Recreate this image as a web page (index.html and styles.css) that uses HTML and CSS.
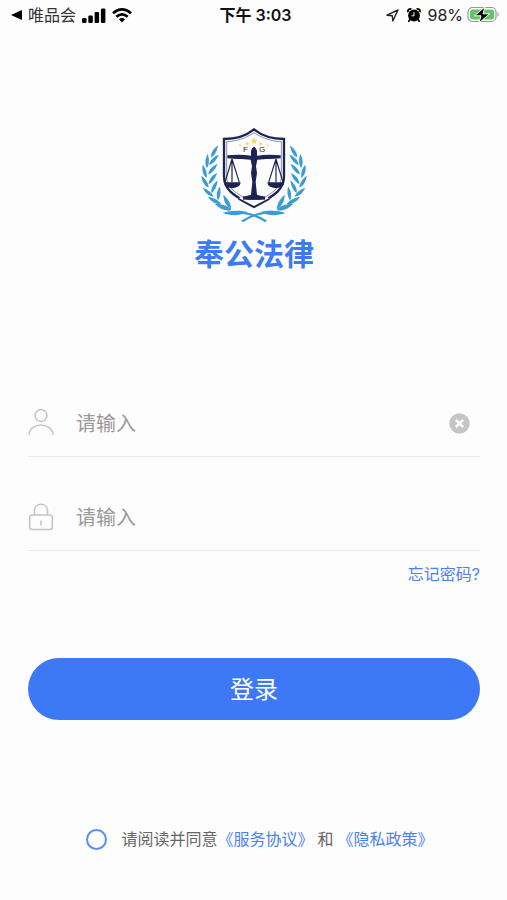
FILE: index.html
```html
<!DOCTYPE html>
<html lang="zh-CN">
<head>
<meta charset="utf-8">
<meta name="viewport" content="width=device-width, initial-scale=1">
<title>奉公法律</title>
<link rel="stylesheet" href="styles.css">
</head>
<body>
<header class="status">
  <div class="status-left">
    <svg width="11" height="10" viewBox="0 0 11 10" aria-hidden="true"><path d="M0 5L11 0V10Z"/></svg>
    <span class="status-app">唯品会</span>
    <svg width="24" height="15" viewBox="0 0 24 15" aria-hidden="true"><rect x="0" y="10" width="4.500" height="5" rx="1.200"/><rect x="6.300" y="7.500" width="4.500" height="7.500" rx="1.200"/><rect x="12.600" y="4" width="4.500" height="11" rx="1.200"/><rect x="18.900" y="0.500" width="4.500" height="14.500" rx="1.200"/></svg>
    <svg width="20" height="15" viewBox="0 0 20 15" aria-hidden="true"><g fill="none" stroke="#000" stroke-width="2.600"><path d="M1 5.300Q10 -2.400 19 5.300"/><path d="M4.300 8.800Q10 3.800 15.700 8.800"/></g><path d="M6.900 11.300Q10 8.800 13.100 11.300L10 14.600Z"/></svg>
  </div>
  <div class="status-time">下午 3:03</div>
  <div class="status-right">
    <svg width="13" height="13" viewBox="0 0 13 13" aria-hidden="true"><path d="M12 1L1 6.200L6.300 6.700L6.800 12Z" fill="none" stroke="#222" stroke-width="1.400" stroke-linejoin="round"/></svg>
    <svg class="alarm" width="14" height="14" viewBox="0 0 14 14" aria-hidden="true"><circle cx="7" cy="7.500" r="5.900"/><path d="M2.800 11.500L1.800 13.300M11.200 11.500L12.200 13.300M.8 3.600Q1 1 3.800 .9M13.200 3.600Q13 1 10.200 .9" fill="none" stroke="#000" stroke-width="1.700" stroke-linecap="round"/><path d="M7 4.200V7.800H4.500" fill="none" stroke="#fff" stroke-width="1"/></svg>
    <span class="status-level">98%</span>
    <svg width="33" height="18" viewBox="0 0 33 18" aria-hidden="true"><rect x="1" y="1.500" width="28" height="14" rx="4.500" fill="#fff" stroke="#999" stroke-width="1.200"/><rect x="3" y="3.500" width="24" height="10" rx="2.500" fill="#65c466"/><path d="M30.500 6Q33 8.500 30.500 11Z" fill="#999"/><path d="M18 .8L7.500 9.800H14L12 17L22.500 7.800H16Z" stroke="#fff" stroke-width="1"/></svg>
  </div>
</header>

<main class="login">
  <div class="brand">
    <svg class="emblem" viewBox="-3 0 390 345" role="img" aria-label="奉公法律">
      <defs>
        <path id="leaf" d="M0 2C-8 -10 -7 -25 1 -40C6 -25 7 -10 0 2Z"/>
        <g id="branch">
          <use href="#leaf" transform="translate(64 126) rotate(29)"/>
          <use href="#leaf" transform="translate(51 157) rotate(2)"/>
          <use href="#leaf" transform="translate(59 149) rotate(41)"/>
          <use href="#leaf" transform="translate(49 187) rotate(-17)"/>
          <use href="#leaf" transform="translate(56 177) rotate(40)"/>
          <use href="#leaf" transform="translate(55 216) rotate(-33)"/>
          <use href="#leaf" transform="translate(57 206) rotate(36)"/>
          <use href="#leaf" transform="translate(69 244) rotate(-52)"/>
          <use href="#leaf" transform="translate(65 232) rotate(25)"/>
          <use href="#leaf" transform="translate(92 267) rotate(-62) scale(1.100)"/>
          <use href="#leaf" transform="translate(84 254) rotate(7)"/>
          <use href="#leaf" transform="translate(122 284) rotate(-72) scale(1.250)"/>
          <use href="#leaf" transform="translate(122 280) rotate(-30) scale(1.150)"/>
          <path d="M98 294C120 285 150 286 173 291C152 303 121 303 98 294Z"/>
          <path d="M150 290C181 291 207 302 231 317L225 322C201 305 180 298 150 296Z"/>
        </g>
      </defs>
      <g fill="#3a9bd5">
        <use href="#branch"/>
        <use href="#branch" transform="translate(384 0) scale(-1 1)"/>
      </g>
      <g fill="none" stroke="#1d2353">
        <path d="M192 43C169 62 136 72 102 72V183C102 231 143 246 192 276C241 246 282 231 282 183V72C248 72 215 62 192 43Z" stroke-width="7"/>
        <path d="M192 53C167 70 139 79 110 80V183C110 225 147 238 192 266C237 238 274 225 274 183V80C245 79 217 70 192 53Z" stroke-width="1.500"/>
        <path d="M126 132L105 202M126 132L148 202M126 132V202M258 132L236 202M258 132L279 202M258 132V202" stroke-width="3.500"/>
      </g>
      <g fill="#1d2353">
        <path d="M112 121Q150 117 183 122V107Q187 96 192 95Q197 96 201 107V122Q234 117 272 121V130Q246 133 230 132L202 134L198 154L201 174L197 201L201 239L223 246V254H160V246L183 239L187 201L183 174L186 154L182 134L154 132Q138 133 112 130Z"/>
        <path d="M101 202H152Q151 218 126 220Q102 218 101 202ZM232 202H283Q282 218 258 220Q233 218 232 202Z"/>
        <path d="M151 247L192 260L233 247L240 252L192 281L144 252Z" fill="#fff"/>
        <path d="M159 244H225V254H159Z"/>
        <path d="M145 248L192 273L239 248V254L192 280L145 254Z"/>
      </g>
      <path d="M192 67L195 74L202 75L197 80L198 87L192 83L186 87L187 80L182 75L189 74ZM172 80L174 84L178 85L175 88L176 92L172 90L168 92L169 88L166 85L170 84ZM212 80L214 84L218 85L215 88L216 92L212 90L208 92L209 88L206 85L210 84ZM150 87L153 91L150 95L147 91ZM234 87L237 91L234 95L231 91Z" fill="#f3d76a"/>
      <text x="166" y="112" class="emblem-text">F</text>
      <text x="216" y="112" class="emblem-text">G</text>
    </svg>
    <h1 class="brand-name">奉公法律</h1>
  </div>

  <form class="form">
    <div class="field">
      <label for="account" aria-label="账号"><svg class="field-icon" viewBox="0 0 26 28"><g fill="none" stroke="#c4c4c4" stroke-width="1.500"><circle cx="13" cy="6.500" r="5.900"/><path d="M.8 26C2.500 12.500 23.500 12.500 25.200 26"/></g></svg></label>
      <input id="account" class="field-input" type="text" placeholder="请输入">
      <button class="clear" type="button" aria-label="清除"><svg viewBox="0 0 21 21"><circle cx="10.500" cy="10.500" r="10.200" fill="#c5c5c5"/><path d="M6.800 6.800L14.200 14.200M14.200 6.800L6.800 14.200" stroke="#fff" stroke-width="2.400"/></svg></button>
    </div>
    <div class="field">
      <label for="password" aria-label="密码"><svg class="field-icon" viewBox="0 0 26 28"><g fill="none" stroke="#c4c4c4" stroke-width="1.500"><rect x="1.700" y="12" width="22.600" height="14.500" rx="2.500"/><path d="M6.500 12V7.500C6.500 -1 19.500 -1 19.500 7.500V12M13 17.500V22.500"/></g></svg></label>
      <input id="password" class="field-input" type="password" placeholder="请输入">
    </div>
    <a class="forgot" href="#">忘记密码?</a>
    <button class="submit" type="submit">登录</button>
    <div class="agreement">
      <input id="agree" class="agree-box" type="checkbox">
      <label for="agree">请阅读并同意<a href="#">《服务协议》</a><span class="and">和</span><a href="#">《隐私政策》</a></label>
    </div>
  </form>
</main>
</body>
</html>
```
FILE: styles.css
```css
* {
  box-sizing: border-box;
}

body {
  margin: 0;
  background: #fdfdfd;
  color: #666;
  font-family: Inter, "Noto Sans CJK SC", sans-serif;
}

a {
  color: #4a80f0;
  text-decoration: none;
}

svg {
  display: block;
  flex: none;
}

.status {
  display: grid;
  grid-template-columns: 1fr auto 1fr;
  align-items: center;
  height: 30px;
  padding: 0 7px 0 11px;
  color: #111;
  font-size: 16px;
  line-height: 30px;
}

.status-left,
.status-right {
  display: flex;
  align-items: center;
  gap: 6px;
}

.status-right {
  justify-content: flex-end;
  gap: 4px;
}

.status-app {
  color: #333;
}

.status-time {
  font-weight: 600;
}

.alarm {
  margin: 0 2px 0 4px;
}

.status-level {
  color: #222;
}

.login {
  padding: 85px 27px 40px 28px;
}

.brand {
  display: flex;
  flex-direction: column;
  align-items: center;
}

.emblem {
  width: 130px;
}

.emblem-text {
  fill: #222;
  font-family: "Liberation Sans", sans-serif;
  font-size: 24px;
  text-anchor: middle;
}

.brand-name {
  margin: 4px 0 0;
  color: #3d7af5;
  font-size: 30px;
  font-weight: 700;
  line-height: 40px;
}

.form {
  display: flex;
  flex-direction: column;
  margin-top: 116px;
}

.field {
  display: flex;
  align-items: center;
  height: 67px;
  padding-right: 10px;
  border-bottom: 1px solid #e8e8e8;
}

.field + .field {
  margin-top: 27px;
}

.field-icon {
  width: 26px;
  height: 28px;
}

.field-input {
  flex: 1;
  min-width: 0;
  margin-left: 22px;
  padding: 2px 0 0;
  border: 0;
  outline: 0;
  background: none;
  color: #333;
  font: inherit;
  font-size: 20px;
  line-height: 30px;
}

.field-input::placeholder {
  color: #999;
}

.clear {
  width: 21px;
  height: 21px;
  padding: 0;
  border: 0;
  background: none;
}

.forgot {
  align-self: flex-end;
  margin-top: 11px;
  font-size: 16px;
  line-height: 24px;
}

.submit {
  height: 62px;
  margin-top: 72px;
  padding: 0 0 4px;
  border: 0;
  border-radius: 31px;
  background: #3d78f5;
  color: #fff;
  font: inherit;
  font-size: 24px;
}

.agreement {
  display: flex;
  align-items: center;
  justify-content: center;
  gap: 14px;
  margin-top: 107px;
  padding-left: 12px;
  font-size: 16px;
  line-height: 24px;
}

.agree-box {
  width: 21px;
  height: 21px;
  margin: 0;
  border: 2px solid #5b8ef2;
  border-radius: 50%;
  appearance: none;
}

.agree-box:checked {
  background: #3d78f5;
}

.and {
  margin: 0 4px;
}
```
